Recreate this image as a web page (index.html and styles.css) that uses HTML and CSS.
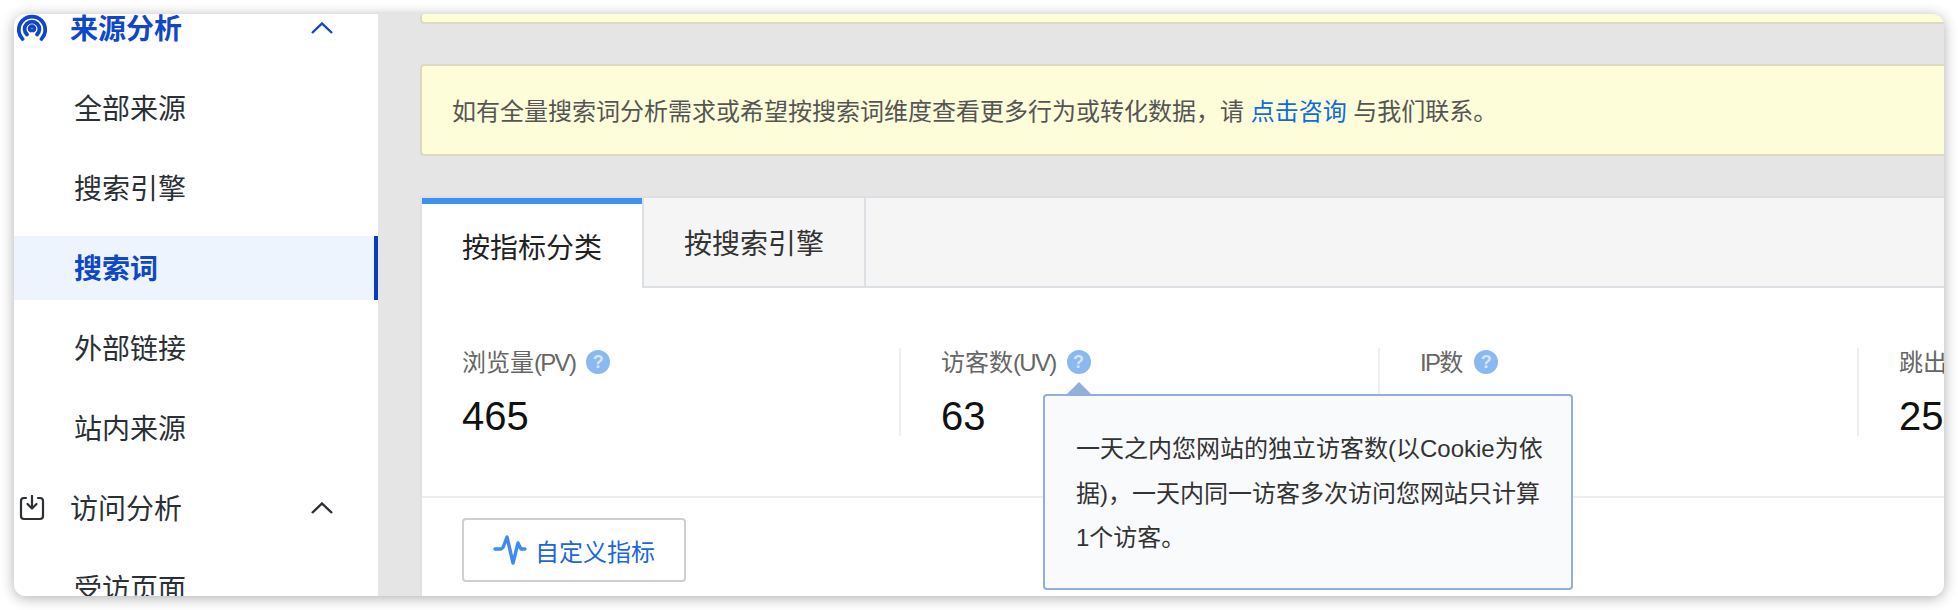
FILE: index.html
```html
<!DOCTYPE html>
<html lang="zh-CN">
<head>
  <meta charset="UTF-8" />
  <meta name="viewport" content="width=device-width, initial-scale=1" />
  <title>搜索词</title>
  <link rel="stylesheet" href="styles.css">
</head>
<body>

  <div class="window">
    <!-- Sidebar -->
    <nav class="sidebar">
      <div class="nav-group active">
        <svg class="nav-icon" width="30" height="28" viewBox="0 0 30 28" fill="none" stroke="currentColor" stroke-width="3.8" stroke-linecap="round">
          <path d="M5.5 25A13.2 13.2 0 1 1 24.5 25" />
          <path d="M10 20.5A7.4 7.4 0 1 1 20 20.5" />
          <path d="M13.6 16.5A2.4 2.4 0 1 1 16.4 16.5" />
        </svg>
        <span>来源分析</span>
        <svg class="chevron" width="22" height="12" viewBox="0 0 22 12" fill="none" stroke="currentColor" stroke-width="2.4"><path d="M1 11 11 1.5 21 11" /></svg>
      </div>
      <a class="nav-item">全部来源</a>
      <a class="nav-item">搜索引擎</a>
      <a class="nav-item current">搜索词</a>
      <a class="nav-item">外部链接</a>
      <a class="nav-item">站内来源</a>
      <div class="nav-group">
        <svg class="nav-icon" width="30" height="26" viewBox="0 0 30 26" fill="none" stroke="currentColor" stroke-width="2.2" stroke-linecap="round" stroke-linejoin="round">
          <path d="M9 3H7A3 3 0 0 0 4 6V21A3 3 0 0 0 7 24H23A3 3 0 0 0 26 21V6A3 3 0 0 0 23 3H21" />
          <path d="M15 1V13" />
          <path d="M10.5 9 15 13.5 19.5 9" />
        </svg>
        <span>访问分析</span>
        <svg class="chevron" width="22" height="12" viewBox="0 0 22 12" fill="none" stroke="currentColor" stroke-width="2.4"><path d="M1 11 11 1.5 21 11" /></svg>
      </div>
      <a class="nav-item">受访页面</a>
    </nav>

    <!-- Main content -->
    <main class="content">
      <div class="notice notice-cut"></div>
      <div class="notice">如有全量搜索词分析需求或希望按搜索词维度查看更多行为或转化数据，请&nbsp;<a class="notice-link">点击咨询</a>&nbsp;与我们联系。</div>

      <section class="panel">
        <div class="tabs">
          <div class="tab selected">按指标分类</div>
          <div class="tab">按搜索引擎</div>
        </div>

        <div class="stats">
          <div class="stat">
            <div class="stat-label"><span>浏览量<span class="latin">(PV)</span></span><span class="help">?</span></div>
            <div class="stat-value">465</div>
          </div>
          <div class="stat">
            <div class="stat-label"><span>访客数<span class="latin">(UV)</span></span><span class="help">?</span></div>
            <div class="stat-value">63</div>
            <div class="tooltip">一天之内您网站的独立访客数(以Cookie为依据)，一天内同一访客多次访问您网站只计算1个访客。</div>
          </div>
          <div class="stat">
            <div class="stat-label"><span><span class="latin">IP</span>数</span><span class="help">?</span></div>
          </div>
          <div class="stat">
            <div class="stat-label"><span>跳出</span></div>
            <div class="stat-value">25</div>
          </div>
        </div>

        <div class="toolbar">
          <button class="btn-metrics">
            <svg class="pulse" width="34" height="32" viewBox="0 0 34 32" fill="none" stroke="#3d8bf2" stroke-width="3.4" stroke-linecap="round" stroke-linejoin="round"><path d="M2 15H8L10 13.5 14 3 20 29 25 9 28 15H32" /></svg>
            自定义指标
          </button>
        </div>
      </section>
    </main>
  </div>

</body>
</html>
```

FILE: styles.css
```css
/* Reset & basics */
* {
  box-sizing: border-box;
}
body {
  margin: 0;
  padding: 14px;
  background: #fff;
  font-family: 'Liberation Sans', 'Noto Sans CJK SC', sans-serif;
  overflow: hidden;
}

.window {
  display: flex;
  height: 582px;
  border-radius: 12px;
  overflow: hidden;
  box-shadow: 0 2px 14px rgba(0, 0, 0, 0.32);
}

/* Sidebar */
.sidebar {
  flex: 0 0 364px;
  display: flex;
  flex-direction: column;
  gap: 16px;
  margin-top: -18px;
  background: #fff;
  color: #2b2f36;
  font-family: 'Noto Sans CJK SC', sans-serif;
  font-size: 28px;
}

.nav-group {
  flex: none;
  display: flex;
  align-items: center;
  height: 64px;
  padding: 0 45px 0 3px;
}

.nav-group span {
  padding-bottom: 2px;
}

.nav-group.active {
  color: #0f47c8;
  font-weight: 700;
}

.nav-icon {
  flex: none;
  margin-right: 23px;
}

.chevron {
  margin-left: auto;
}

.nav-item {
  flex: none;
  display: flex;
  align-items: center;
  height: 64px;
  padding: 0 0 2px 60px;
}

.nav-item.current {
  background: #edf4fd;
  border-right: 4px solid #0a3cc0;
  color: #0f47c8;
  font-weight: 700;
}

/* Main content */
.content {
  flex: 1;
  min-width: 0;
  padding-left: 42px;
  background: #e5e5e5;
}

.notice {
  display: flex;
  align-items: center;
  height: 92px;
  margin-top: 40px;
  padding: 0 0 2px 30px;
  background: #fdfdd9;
  border: 2px solid #dcd9c0;
  border-right: none;
  border-radius: 4px 0 0 4px;
  color: #555;
  font-size: 24px;
}

.notice-cut {
  height: 10px;
  margin-top: 0;
  padding: 0;
  border-top: none;
}

.notice-link {
  color: #0f6bde;
}

.panel {
  height: 400px;
  margin-top: 40px;
  background: #fff;
  border-left: 2px solid #dde1e6;
}

.tabs {
  display: flex;
  height: 92px;
  background: #f5f5f5;
  border-top: 2px solid #dcdfe3;
  border-bottom: 2px solid #dcdfe3;
}

.tab {
  display: flex;
  align-items: center;
  justify-content: center;
  width: 224px;
  border-right: 2px solid #dcdfe3;
  border-left: 2px solid #dcdfe3;
  color: #333;
  font-family: 'Noto Sans CJK SC', sans-serif;
  font-size: 28px;
}

.tab.selected {
  width: 220px;
  height: 90px;
  background: #fff;
  border: none;
  border-top: 6px solid #3f8ff5;
  color: #222;
}

.stats {
  display: flex;
  padding-top: 60px;
  height: 210px;
  border-bottom: 2px solid #eee;
}

.stat {
  position: relative;
  flex: 0 0 479px;
  height: 88px;
  padding-left: 40px;
  border-right: 2px solid #eee;
}

.stat-label {
  display: flex;
  align-items: center;
  gap: 11px;
  height: 24px;
  color: #666;
  font-size: 24px;
  white-space: nowrap;
}

.latin {
  letter-spacing: -1.7px;
}

.help {
  flex: none;
  width: 24px;
  height: 24px;
  margin-top: 4px;
  border-radius: 50%;
  background: #8ab8f0;
  color: #d5e5fa;
  font-size: 18px;
  font-weight: 700;
  line-height: 24px;
  text-align: center;
}

.stat-value {
  margin-top: 20px;
  color: #111;
  font-size: 40px;
  line-height: 48px;
}

.tooltip {
  position: absolute;
  top: 46px;
  left: 142px;
  width: 530px;
  padding: 31px 26px 27px 31px;
  background: #f9fafc;
  border: 2px solid #8fb0dd;
  border-radius: 4px;
  color: #333;
  font-size: 24px;
  line-height: 44.5px;
}

.tooltip::before {
  content: '';
  position: absolute;
  top: -14px;
  left: 22px;
  border-left: 12px solid transparent;
  border-right: 12px solid transparent;
  border-bottom: 12px solid #92afd9;
}

.toolbar {
  padding: 20px 0 0 40px;
}

.btn-metrics {
  display: flex;
  align-items: center;
  justify-content: center;
  gap: 8px;
  width: 224px;
  height: 64px;
  padding: 0;
  background: #fff;
  border: 2px solid #ccd0d2;
  border-radius: 4px;
  color: #1a66e0;
  font-family: inherit;
  font-size: 24px;
}

.pulse {
  filter: blur(0.5px);
}
```
